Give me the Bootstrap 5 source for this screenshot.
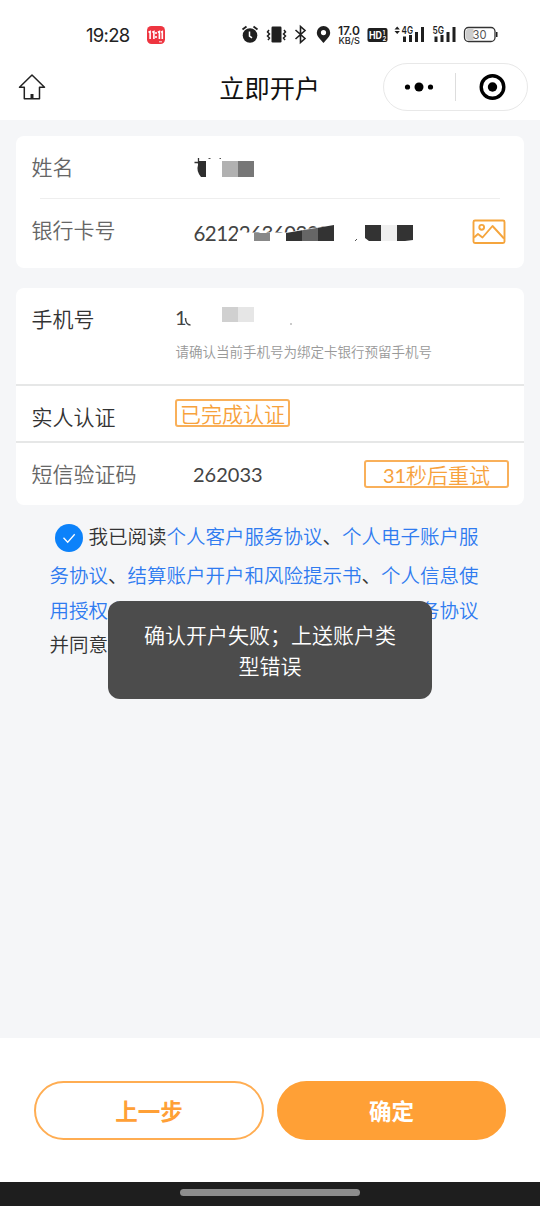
<!DOCTYPE html>
<html lang="zh-CN">
<head>
<meta charset="utf-8">
<meta name="viewport" content="width=device-width, initial-scale=1">
<title>立即开户</title>
<link href="https://cdn.jsdelivr.net/npm/bootstrap@5.3.0/dist/css/bootstrap.min.css" rel="stylesheet">
<style>
  body{font-family:Lato,"Noto Sans CJK SC",sans-serif;background:#f5f6f8;color:#333;width:540px;height:1206px;overflow:hidden;font-weight:400}
  svg{display:block;flex:none}
  .zh{font-family:"Noto Sans CJK SC",sans-serif;font-weight:350}
  .top-area{height:120px;background:#fff}
  .status-row{height:58px;padding:11px 40px 0 86px}
  .clock{font:400 18.5px/24px Inter,sans-serif;color:#222;letter-spacing:-.7px;width:61px}
  .title-row{height:58px;padding:0 12px 0 17px}
  .page-title{font-size:25.200px;line-height:34px;color:#111;font-weight:400;margin-left:17px}
  .capsule{width:145px;height:48px;border:1px solid #e8e8e8;border-radius:24px}
  .panel{background:#fff;border-radius:8px;margin:0 16px;width:508px}
  .lbl{font-size:21px;line-height:30px;color:#666;white-space:nowrap}
  .lbl-dark{color:#333}
  .cell{padding:0 15px 0 15.5px}
  .rule{border-top:1px solid #eee}
  .rule2{border-top:2px solid #e6e7e7}
  .hint{font-size:13.5px;line-height:20px;color:#999;white-space:nowrap}
  .digits{font-family:Lato,sans-serif;font-weight:400;font-size:20px;line-height:30px;color:#444}
  .tagbox{border:2px solid #f9b05a;border-radius:3px;color:#f7a23c;font-size:21px;height:28px;line-height:24px;text-align:center;white-space:nowrap}
  .agree{padding:0 0 0 49.500px;font-size:19.5px;color:#333;white-space:nowrap}
  .agree a{color:#2f7bf0;text-decoration:none}
  .agree .ln{height:34.5px;line-height:34.5px}
  .toast-box{left:108px;top:601px;width:324px;height:98px;border-radius:12px;background:#4c4c4c;color:#fff;font-size:21px;line-height:31px;padding-top:18px;text-align:center}
  .foot{height:144px;background:#fff;padding:43px 34px 0}
  .btn-pill{width:230px;height:59px;border-radius:30px;font:700 22.5px/1 "Noto Sans CJK SC",sans-serif;border:2px solid #ffad52;color:#ffa036;padding:0 0 1px}
  .btn-pill.solid{background:#ffa036;border-color:#ffa036;color:#fff;width:229px}
  .gesture{height:24px;background:#1e1e1e;padding-top:7px}
  .gesture div{width:180px;height:7px;border-radius:4px;background:#8d8d8d}
</style>
</head>
<body class="d-flex flex-column position-relative">
<header class="top-area">
  <div class="status-row d-flex align-items-center">
    <span class="clock">19:28</span>
    <svg width="18" height="18" viewBox="0 0 18 18"><rect width="18" height="18" rx="4.5" fill="#ee3540"/><g stroke="#fff" stroke-width="1.6" fill="none"><path d="M1.5 6.2l1.6-.7V13M5.300 6.2l1.6-.7V13M10.800 6.2l1.6-.7V13M14 6.2l1.3-.7V13M9 6v2M9 10v2"/></g><path d="M12 15.800h3" stroke="#fff" stroke-width=".9"/></svg>
    <svg class="ms-auto" width="260" height="24" viewBox="240 23 260 24" fill="#1f1f1f">
      <circle cx="250" cy="35.500" r="7.3"/><path d="M242.5 29.5l4-3M257.500 29.500l-4-3" stroke="#1f1f1f" stroke-width="1.8"/><path d="M249.500 31.500v4.500l2.500 1.800" stroke="#fff" stroke-width="1.500" fill="none"/>
      <rect x="271.500" y="26.500" width="10" height="16" rx="1.200"/><path d="M269 30l-1.500 2 2 2-2 2 2 2-1.500 2M284 30l1.500 2-2 2 2 2-2 2 1.500 2" fill="none" stroke="#1f1f1f" stroke-width="1.500"/>
      <path d="M295.500 30l9.500 8.500-4.500 4V26.500l4.500 4-9.500 8.500" fill="none" stroke="#1f1f1f" stroke-width="1.600"/>
      <path fill-rule="evenodd" d="M323.500 26a6.700 6.700 0 0 1 6.700 6.700c0 4-4.500 7.500-6.700 10.300-2.200-2.800-6.700-6.300-6.700-10.300a6.700 6.700 0 0 1 6.700-6.700zm0 4a2.600 2.600 0 1 0 0 5.200 2.600 2.600 0 0 0 0-5.200z"/>
      <g font-family="Inter,sans-serif" font-weight="600"><text x="338" y="35" font-size="12" textLength="22" lengthAdjust="spacingAndGlyphs">17.0</text><text x="338.500" y="43.700" font-size="8.500" font-weight="500" textLength="21.500" lengthAdjust="spacingAndGlyphs">KB/S</text>
      <rect x="367.500" y="28" width="20" height="14" rx="2"/><text x="369" y="39" font-size="10" fill="#fff" font-weight="700" textLength="13" lengthAdjust="spacingAndGlyphs">HD</text><text x="382.500" y="34.500" font-size="6" fill="#fff">1</text><text x="382.500" y="40.500" font-size="6" fill="#fff">2</text>
      <path d="M394.500 29.500l2.700-3 2.700 3zM394.500 31l2.700 3 2.700-3z"/>
      <text x="401.500" y="34" font-size="10.500" textLength="11.500" lengthAdjust="spacingAndGlyphs">4G</text><text x="432.500" y="34" font-size="10.500" textLength="11.500" lengthAdjust="spacingAndGlyphs">5G</text></g>
      <path d="M403 36.500h3v5.500h-3zM409 35h3v7h-3zM415 32h3v10h-3zM421 27h3v15h-3zM434.500 36.500h3v5.500h-3zM440.500 35h3v7h-3zM446.500 32h3v10h-3zM452.500 27h3v15h-3z"/>
      <rect x="464.500" y="27.500" width="30.500" height="14" rx="4" fill="#fff" stroke="#333" stroke-width="1.300"/><path d="M468.500 29h5v11h-5a2.500 2.500 0 0 1-2.500-2.500v-6a2.500 2.500 0 0 1 2.500-2.500z" fill="#ccc"/><rect x="496" y="32" width="1.500" height="5"/>
      <text x="472.500" y="39" font-family="Inter,sans-serif" font-size="12" fill="#555" textLength="14" lengthAdjust="spacingAndGlyphs">30</text>
    </svg>
  </div>
  <div class="title-row d-flex align-items-center justify-content-between">
    <svg width="30" height="30" viewBox="0 0 30 30" fill="none" stroke="#222" stroke-width="1.500" stroke-linejoin="round"><path d="M15 3L2.500 15.300H7.300V26.800H22.500V15.300H27.500z"/><path d="M15 22v5" stroke-width="3"/></svg>
    <div class="d-flex align-items-center" style="gap:63px">
      <h1 class="page-title zh m-0">立即开户</h1>
      <div class="capsule d-flex align-items-center">
        <svg width="143" height="46" viewBox="0 0 143 46"><circle cx="23.500" cy="23" r="2.600"/><circle cx="35" cy="23" r="4.500"/><circle cx="46.500" cy="23" r="2.600"/><path d="M71.500 9v28" stroke="#ddd"/><circle cx="108.500" cy="23" r="11.300" fill="none" stroke="#000" stroke-width="3.400"/><circle cx="108.500" cy="23" r="4.700"/></svg>
      </div>
    </div>
  </div>
</header>

<main class="flex-grow-1">
  <section class="panel" style="margin-top:16px;height:132px">
    <div class="cell d-flex" style="height:62px">
      <span class="lbl zh" style="margin-top:15px;width:148.500px">姓名</span>
      <svg width="90" height="45" viewBox="0 0 90 45" style="margin-top:9px"><path d="M14.500 17.500h6.500M18.500 13v6" stroke="#333" stroke-width="1.300"/><path d="M18 16h8v16h-5q-5-6-3-12z" fill="#2e2e2e"/><path d="M28.500 13.500h2M39.500 13.500h1.500" stroke="#555"/><path fill="#b1b1b1" d="M42 16h16v16H42z"/><path fill="#777" d="M58 16h16v16H58z"/></svg>
    </div>
    <div class="rule" style="margin:0 24px"></div>
    <div class="cell d-flex" style="height:69px">
      <span class="lbl zh" style="margin-top:15px;width:148.500px">银行卡号</span>
      <svg width="250" height="40" viewBox="0 0 250 40" style="margin-top:13px"><text x="13.500" y="29" font-family="Lato,sans-serif" font-size="20.500" fill="#444" textLength="148">6212263602027</text><path fill="#fff" d="M57 20.500h49l54-9V31H57z"/><path fill="#888" d="M74 21h16v8H74z"/><path fill="#333" d="M106 21l16-2.700V29h-16zM138 15.700l16-2.700v16h-16z"/><path fill="#666" d="M122 18.300l16-2.600V29h-16z"/><path fill="#fff" d="M154 8h10v22h-10z"/><path d="M175 29l2-2" stroke="#555"/><path fill="#333" d="M185 13h16v16h-12l-4-3zM217 13h16v15l-8 1h-8z"/><path fill="#efefef" d="M201 13h16v16h-16z"/></svg>
      <svg class="ms-auto" width="38" height="30" viewBox="1.500 0 38 30" style="margin-top:18px" fill="none" stroke="#f5a53d" stroke-width="1.900" stroke-linejoin="round"><rect x="4" y="3.500" width="31" height="22.500" rx="1.500"/><circle cx="12.200" cy="10.300" r="2.400"/><path d="M4.500 20.500l4-3.500 4.500 3.500 10-11.500L34.500 21.500"/></svg>
    </div>
  </section>

  <section class="panel" style="margin-top:20px;height:217px">
    <div class="cell d-flex" style="height:96px">
      <span class="lbl lbl-dark zh" style="margin-top:15px;width:143.500px">手机号</span>
      <div style="padding-top:12px">
        <svg width="140" height="38" viewBox="175 300 140 38"><text x="175" y="325" font-family="Lato,sans-serif" font-size="20" fill="#444">1</text><path d="M185.500 318c0 4 2 7 5 7" fill="none" stroke="#444" stroke-width="1.500"/><path fill="#d0d0d0" d="M222 307h16v15h-16z"/><path fill="#e6e6e6" d="M238 307h16v15h-16z"/><circle cx="291" cy="324" r=".8" fill="#888"/></svg>
        <div class="hint zh" style="margin-top:3px;padding-left:.5px">请确认当前手机号为绑定卡银行预留手机号</div>
      </div>
    </div>
    <div class="rule2"></div>
    <div class="cell d-flex" style="height:55px">
      <span class="lbl lbl-dark zh" style="margin-top:15px;width:143.500px">实人认证</span>
      <span class="tagbox zh" style="margin-top:13px;width:115px">已完成认证</span>
    </div>
    <div class="rule2"></div>
    <div class="cell d-flex" style="height:62px">
      <span class="lbl zh" style="margin-top:15px;width:161.500px">短信验证码</span>
      <span class="digits" style="margin-top:15.500px">262033</span>
      <span class="tagbox zh ms-auto" style="margin-top:17px;width:145px"><span style="font-family:Lato,sans-serif;font-size:20px;font-weight:400">31</span>秒后重试</span>
    </div>
  </section>

  <section class="agree zh">
    <div class="d-flex align-items-center" style="height:53px;padding:12px 0 0 5.500px">
      <svg width="28" height="28" viewBox="0 0 28 28"><circle cx="14" cy="14" r="14" fill="#0c82fa"/><path d="M8.500 13.800l4.200 4.500 7-8" fill="none" stroke="#fff" stroke-width="1.300"/></svg>
      <span style="margin:-4px 0 0 5.500px">我已阅读<a href="#">个人客户服务协议</a>、<a href="#">个人电子账户服</a></span>
    </div>
    <div class="ln"><a href="#">务协议</a>、<a href="#">结算账户开户和风险提示书</a>、<a href="#">个人信息使</a></div>
    <div class="ln"><a href="#">用授权书</a>、<a href="#">敏感信息处理授权文书</a>、<a href="#">电子服务协议</a></div>
    <div class="ln">并同意授权</div>
  </section>
</main>

<footer>
  <div class="foot d-flex justify-content-between">
    <button class="btn btn-pill" type="button">上一步</button>
    <button class="btn btn-pill solid" type="button">确定</button>
  </div>
  <div class="gesture d-flex justify-content-center"><div></div></div>
</footer>

<div class="toast-box zh position-absolute" role="alert">确认开户失败；上送账户类<br>型错误</div>
<script src="https://cdn.jsdelivr.net/npm/bootstrap@5.3.0/dist/js/bootstrap.bundle.min.js"></script>
</body>
</html>
